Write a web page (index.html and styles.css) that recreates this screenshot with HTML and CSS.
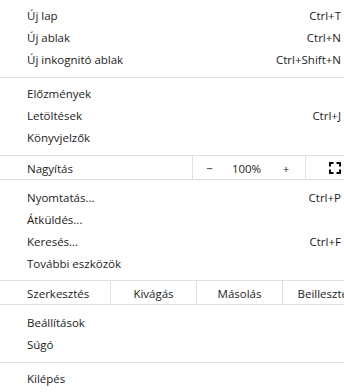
FILE: index.html
```html
<!DOCTYPE html>
<html lang="hu">
<head>
    <meta charset="UTF-8">
    <meta name="viewport" content="width=device-width, initial-scale=1.0">
    <title>Menü</title>
    <link rel="stylesheet" href="styles.css">
</head>
<body>

    <div class="menu">
        <div class="item"><span>Új lap</span><span class="key">Ctrl+T</span></div>
        <div class="item"><span>Új ablak</span><span class="key">Ctrl+N</span></div>
        <div class="item"><span>Új inkognitó ablak</span><span class="key">Ctrl+Shift+N</span></div>
        <div class="sep"></div>
        <div class="item"><span>Előzmények</span></div>
        <div class="item"><span>Letöltések</span><span class="key">Ctrl+J</span></div>
        <div class="item"><span>Könyvjelzők</span></div>

        <!-- Nagyítás -->
        <div class="split">
            <span class="split__label zoom__label">Nagyítás</span>
            <div class="zoom__ctrl">
                <span class="zoom__btn">&minus;</span>
                <span class="zoom__value">100%</span>
                <span class="zoom__btn zoom__btn--plus">+</span>
            </div>
            <div class="zoom__full">
                <svg width="12" height="12" viewBox="0 0 12 12" fill="none" stroke="#000" stroke-width="2">
                    <path d="M1 4.5V1h3.5M7.5 1H11v3.5M11 7.5V11H7.5M4.5 11H1V7.5"/>
                </svg>
            </div>
        </div>

        <div class="item"><span>Nyomtatás...</span><span class="key">Ctrl+P</span></div>
        <div class="item"><span>Átküldés...</span></div>
        <div class="item"><span>Keresés...</span><span class="key">Ctrl+F</span></div>
        <div class="item"><span>További eszközök</span></div>

        <!-- Szerkesztés -->
        <div class="split split--edit">
            <span class="split__label edit__label">Szerkesztés</span>
            <span class="edit__btn">Kivágás</span>
            <span class="edit__btn">Másolás</span>
            <span class="edit__btn">Beillesztés</span>
        </div>

        <div class="item"><span>Beállítások</span></div>
        <div class="item"><span>Súgó</span></div>
        <div class="sep"></div>
        <div class="item"><span>Kilépés</span></div>
    </div>

</body>
</html>
```

FILE: styles.css
```css
body {
    margin: 0;
    padding: 0;
    background-color: #fff;
    font-family: "Open Sans", "Noto Sans", Arial, sans-serif;
    font-size: 11.5px;
    color: #1c1c1c;
}

.menu {
    width: 344px;
    padding-top: 4px;
    overflow: hidden;
}

.item {
    height: 22px;
    line-height: 24px;
    padding: 0 3px 0 27px;
    display: flex;
    justify-content: space-between;
    white-space: nowrap;
}

.sep {
    height: 1px;
    background-color: #e0e0e0;
    margin: 7px 0 4px;
}

/* sorok belső elválasztóval */
.split {
    display: flex;
    height: 23px;
    line-height: 25px;
    border-top: 1px solid #e0e0e0;
    border-bottom: 1px solid #e0e0e0;
    margin: 7px 0 6px;
    white-space: nowrap;
    overflow: hidden;
}

.split--edit {
    margin-top: 6px;
}

.split__label {
    padding-left: 27px;
    box-sizing: border-box;
}

.zoom__label {
    width: 192px;
}

.zoom__ctrl {
    width: 112px;
    display: flex;
    border-left: 1px solid #e0e0e0;
}

.zoom__btn {
    width: 33px;
    text-align: center;
}

.zoom__btn--plus {
    width: 38px;
}

.zoom__value {
    width: 41px;
    text-align: center;
}

.zoom__full {
    flex: 1;
    display: flex;
    align-items: center;
    padding-left: 23px;
    border-left: 1px solid #e0e0e0;
}

.zoom__full svg {
    display: block;
}

.edit__label {
    width: 110px;
    flex-shrink: 0;
}

.edit__btn {
    width: 85px;
    flex-shrink: 0;
    text-align: center;
    border-left: 1px solid #e0e0e0;
}
```
